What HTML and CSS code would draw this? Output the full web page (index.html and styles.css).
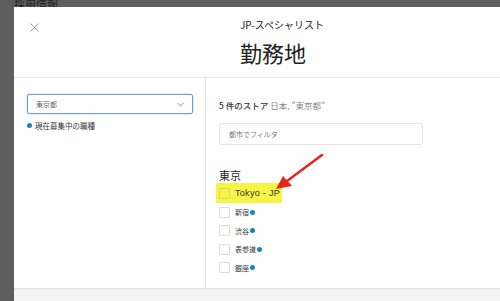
FILE: index.html
```html
<!DOCTYPE html>
<html lang="ja">
<head>
  <meta charset="UTF-8">
  <meta name="viewport" content="width=device-width, initial-scale=1.0">
  <title>勤務地</title>
  <link rel="stylesheet" href="styles.css">
</head>
<body>
  <div class="backdrop">
    <h2 class="page-title">採用情報</h2>
  </div>

  <div class="modal">
    <div class="modal-header">
      <button class="close" aria-label="閉じる">
        <svg width="9" height="9" viewBox="0 0 9 9"><path d="M0.5 0.5 L8.5 8.5 M8.5 0.5 L0.5 8.5" stroke="#9a9a9a" stroke-width="1" fill="none"/></svg>
      </button>
      <div class="titles">
        <div class="job-name">JP-スペシャリスト</div>
        <h1>勤務地</h1>
      </div>
    </div>

    <div class="modal-body">
      <div class="side">
        <div class="select">
          <span>東京都</span>
          <svg width="7" height="5" viewBox="0 0 7 5"><path d="M0.5 1 L3.5 4 L6.5 1" stroke="#888" stroke-width="1" fill="none"/></svg>
        </div>
        <div class="legend"><span class="dot"></span>現在募集中の職種</div>
      </div>

      <div class="main">
        <p class="count"><strong>5 件のストア</strong> <span class="muted">日本, "東京都"</span></p>
        <input class="filter" type="text" placeholder="都市でフィルタ">

        <h3 class="city">東京</h3>
        <ul class="stores">
          <li class="marked"><span class="box"></span><span class="latin">Tokyo - JP</span></li>
          <li><span class="box"></span>新宿<span class="dot"></span></li>
          <li><span class="box"></span>渋谷<span class="dot"></span></li>
          <li><span class="box"></span>表参道<span class="dot"></span></li>
          <li><span class="box"></span>銀座<span class="dot"></span></li>
        </ul>
      </div>
    </div>

    <div class="modal-footer"></div>
  </div>

  <!-- annotation arrow -->
  <svg class="arrow" width="500" height="301" viewBox="0 0 500 301">
    <path d="M322 155 L287 181" stroke="#e8231c" stroke-width="2.5" stroke-linecap="round" fill="none"/>
    <path d="M276 189 L283 176 L292 186 Z" fill="#e8231c"/>
  </svg>
</body>
</html>
```

FILE: styles.css
```css
html, body {
  height: 100%;
}

body {
  margin: 0;
  background-color: #5e5e5e;
  font-family: "Noto Sans CJK JP", "Liberation Sans", sans-serif;
  color: #333;
  overflow: hidden;
}

.backdrop {
  padding: 0 0 0 14px;
}

.page-title {
  margin: 0;
  margin-top: -4px;
  font-size: 11px;
  font-weight: normal;
  color: #222;
}

.modal {
  position: absolute;
  left: 14px;
  top: 7px;
  right: 0;
  bottom: 0;
  background-color: #fff;
  display: flex;
  flex-direction: column;
}

.modal-header {
  height: 70px;
  border-bottom: 1px solid #e8e8e8;
  display: flex;
  position: relative;
}

.close {
  position: absolute;
  left: 16px;
  top: 16px;
  width: 9px;
  height: 9px;
  padding: 0;
  border: none;
  background: none;
  display: flex;
}

.titles {
  padding: 11px 0 0 226px;
}

.job-name {
  font-size: 10px;
  line-height: 14px;
  color: #222;
}

h1 {
  margin: 5px 0 0;
  font-size: 22px;
  line-height: 30px;
  font-weight: normal;
  color: #222;
}

.modal-body {
  flex: 1;
  display: flex;
  border-bottom: 1px solid #e3e3e3;
}

.side {
  border-right: 1px solid #e6e6e6;
  padding: 16px 12px 0 13px;
  box-sizing: border-box;
  width: 192px;
}

.select {
  height: 20px;
  border: 1px solid #6c9fd6;
  border-radius: 2px;
  box-shadow: 0 0 2px rgba(108, 159, 214, 0.6);
  display: flex;
  align-items: center;
  justify-content: space-between;
  padding: 0 8px 0 8px;
  box-sizing: border-box;
  font-size: 7px;
  color: #666;
}

.legend {
  margin-top: 6px;
  display: flex;
  align-items: center;
  font-size: 7.5px;
  color: #333;
}

.dot {
  display: inline-block;
  width: 5px;
  height: 5px;
  border-radius: 50%;
  background-color: #1d7fc0;
  margin-right: 3px;
}

.main {
  flex: 1;
  padding: 21px 0 0 13px;
}

.count {
  margin: 0;
  font-size: 8.5px;
  line-height: 12px;
}

.count strong {
  font-weight: 500;
  color: #333;
}

.muted {
  color: #888;
}

.filter {
  display: block;
  margin-top: 12px;
  width: 204px;
  height: 22px;
  box-sizing: border-box;
  border: 1px solid #e4e4e4;
  border-radius: 2px;
  padding: 0 9px;
  font-family: inherit;
  font-size: 7px;
  color: #777;
}

.filter::placeholder {
  color: #777;
}

.city {
  margin: 23px 0 0;
  font-size: 11px;
  line-height: 14px;
  font-weight: normal;
  color: #222;
}

.stores {
  list-style: none;
  margin: 1px 0 0;
  padding: 0;
}

.stores li {
  display: flex;
  align-items: center;
  height: 18.5px;
  font-size: 7px;
  color: #333;
}

.stores li .dot {
  margin: 0 0 0 1px;
}

.stores li.marked {
  background-color: #f6f545;
  margin-left: -3px;
  padding-left: 3px;
  width: 63px;
  height: 20px;
}

.box {
  width: 11px;
  height: 11px;
  border: 1px solid #dcdcdc;
  border-radius: 1px;
  box-sizing: border-box;
  margin-right: 5px;
  background-color: #fff;
}

.marked .box {
  background-color: transparent;
  border-color: #d8d66a;
}

.latin {
  font-family: "Liberation Sans", sans-serif;
  font-size: 9px;
  letter-spacing: 0.3px;
  color: #333;
}

.modal-footer {
  height: 11px;
  background-color: #f3f3f3;
  border-top: 1px solid #ececec;
}

.arrow {
  position: absolute;
  left: 0;
  top: 0;
  pointer-events: none;
}
```
